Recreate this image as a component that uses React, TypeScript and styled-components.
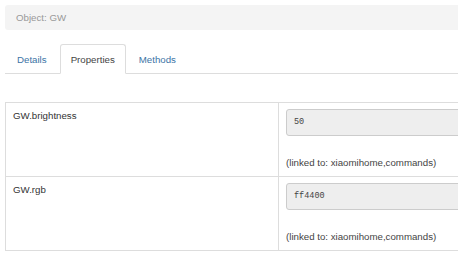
import React from 'react';
import styled, {createGlobalStyle} from 'styled-components';

const Global = createGlobalStyle`
  html, body {
    margin: 0;
    padding: 0;
    background: #ffffff;
    overflow: hidden;
  }
  body {
    font-family: "Liberation Sans", Arial, sans-serif;
    font-size: 9.7px;
    color: #333;
  }
`;

const Page = styled.div`
  padding: 5px 0 0 5px;
  width: 600px;
`;

const Header = styled.div`
  height: 25px;
  line-height: 25px;
  background: #f4f4f4;
  border-radius: 3px;
  padding-left: 11px;
  color: #999;
  margin-bottom: 14px;
`;

const Tabs = styled.ul`
  list-style: none;
  margin: 0;
  padding: 0;
  display: flex;
  border-bottom: 1px solid #ddd;
`;

const Tab = styled.li<{$active?: boolean}>`
  height: 28px;
  line-height: 30px;
  padding: 0 10px;
  margin-right: 2px;
  margin-bottom: -1px;
  border: 1px solid ${p => (p.$active ? '#ddd' : 'transparent')};
  border-bottom-color: ${p => (p.$active ? '#fff' : 'transparent')};
  border-radius: 3px 3px 0 0;
  background: ${p => (p.$active ? '#fff' : 'transparent')};
  color: ${p => (p.$active ? '#444' : '#3c74a6')};
  &:first-child { margin-left: 1px; }
`;

const Table = styled.table`
  margin-top: 28px;
  border-collapse: collapse;
  width: 560px;
  > tbody > tr > td {
    border: 1px solid #ddd;
    padding: 6px 7px 7px;
    vertical-align: top;
    line-height: 12px;
  }
  > tbody > tr > td:first-child {
    width: 258px;
    padding-top: 7px;
    padding-bottom: 6px;
  }
`;

const Value = styled.div`
  height: 25px;
  line-height: 25px;
  border: 1px solid #ccc;
  border-radius: 3px;
  background: #eeeeee;
  padding-left: 7px;
  font-family: "Liberation Mono", "Courier New", monospace;
  font-size: 8.5px;
  color: #444;
  width: 260px;
`;

const Linked = styled.div`
  margin-top: 21px;
  color: #444;
`;

const rows = [
  {name: 'GW.brightness', value: '50'},
  {name: 'GW.rgb', value: 'ff4400'},
];

function App() {
  return (
    <Page>
      <Global/>
      <Header>Object: GW</Header>
      <Tabs>
        <Tab>Details</Tab>
        <Tab $active>Properties</Tab>
        <Tab>Methods</Tab>
      </Tabs>
      <Table>
        <tbody>
          {rows.map(r => (
            <tr key={r.name}>
              <td>{r.name}</td>
              <td>
                <Value>{r.value}</Value>
                <Linked>(linked to: xiaomihome,commands)</Linked>
              </td>
            </tr>
          ))}
        </tbody>
      </Table>
    </Page>
  );
}

export default App;
